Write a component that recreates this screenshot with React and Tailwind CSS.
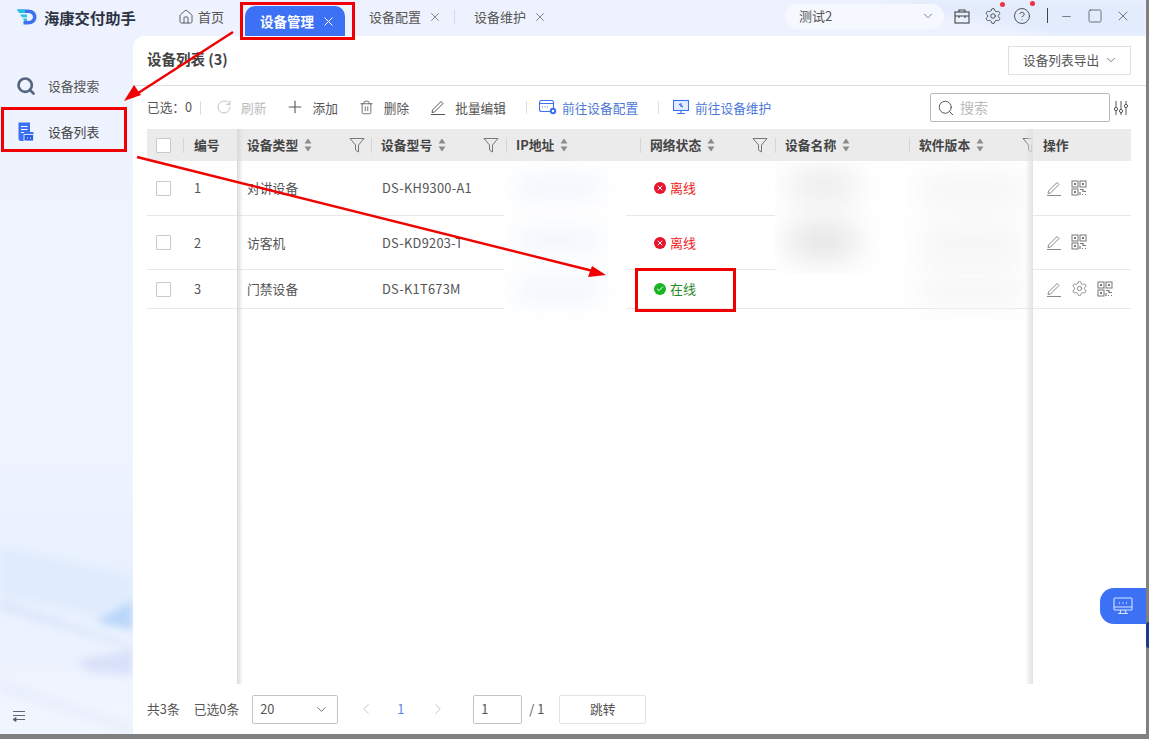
import { ChevronDown, ChevronLeft, ChevronRight, Settings, House, X, Plus, Trash2, RotateCw, Search, CircleHelp, Minus, Square, Check } from 'lucide-react';

const font = { fontFamily: '"Noto Sans CJK SC", "Liberation Sans", sans-serif' };

const columns = [
  { title: '设备类型', w: 'w-[134px]', filter: 'right-[6px]' },
  { title: '设备型号', w: 'w-[135px]', filter: 'right-[7px]' },
  { title: 'IP地址', w: 'w-[134px]' },
  { title: '网络状态', w: 'w-[135px]', filter: 'right-[7px]' },
  { title: '设备名称', w: 'w-[134px]' },
  { title: '软件版本', w: 'w-[124px]', filter: 'right-[-5px]' },
];

const rows = [
  { id: 1, type: '对讲设备', model: 'DS-KH9300-A1', online: false, h: 'h-[55px]' },
  { id: 2, type: '访客机', model: 'DS-KD9203-T', online: false, h: 'h-[54px]' },
  { id: 3, type: '门禁设备', model: 'DS-K1T673M', online: true, h: 'h-[39px]' },
];

function SortArrows() {
  return (
    <svg width="8" height="14" viewBox="0 0 8 14" className="ml-[6px] shrink-0">
      <path d="M4 0.5 L7.5 5.5 H0.5Z M4 13.5 L0.5 8.5 H7.5Z" fill="#8b8b8b" />
    </svg>
  );
}

function FilterIcon({ className }) {
  return (
    <svg width="16" height="16" viewBox="0 0 16 16" fill="none" stroke="#777" strokeWidth="1" className={className}>
      <path d="M1 1.5 H15 L9.5 8 V15 L6.5 13 V8Z" />
    </svg>
  );
}

function HeaderCell({ col }) {
  return (
    <div className={`${col.w} relative flex items-center pl-[10px] shrink-0`}>
      <span className="w-px h-[15px] bg-[#d6d6d6] absolute left-0 top-[9px]" />
      <span className="text-[12.8px] font-bold text-[#444]">{col.title}</span>
      <SortArrows />
      {col.filter && <FilterIcon className={`absolute top-[8px] ${col.filter}`} />}
    </div>
  );
}

function QrIcon() {
  return (
    <svg width="16" height="16" viewBox="0 0 16 16" fill="none" stroke="#777" strokeWidth="1">
      <rect x="1" y="1" width="6" height="6" />
      <rect x="9" y="1" width="6" height="6" />
      <rect x="1" y="9" width="6" height="6" />
      <rect x="3.5" y="3.5" width="1" height="1" fill="#777" />
      <rect x="11.5" y="3.5" width="1" height="1" fill="#777" />
      <rect x="3.5" y="11.5" width="1" height="1" fill="#777" />
      <path d="M9 9.5h3v2h3M9 12v3M11 14.5h1M14 14.5h1" strokeWidth="1.2" />
    </svg>
  );
}

function PenLine({ size = 16, color = '#888' }) {
  return (
    <svg width={size} height={size} viewBox="0 0 16 16" fill="none" stroke={color} strokeWidth="1">
      <path d="M2.5 11 L11 2.5 L13 4.5 L4.5 13 L2 13.5Z" />
      <path d="M1 15.5 H15" />
    </svg>
  );
}

function Checkbox() {
  return <span className="block w-[15px] h-[15px] border border-[#c9c9c9] rounded-[1px] bg-white" />;
}

function Status({ online }) {
  return (
    <div className="flex items-center gap-[4px] pl-[14px]">
      {online ? (
        <span className="w-3 h-3 rounded-full bg-[#17b51f] flex items-center justify-center">
          <Check size={8} strokeWidth={3} className="text-white" />
        </span>
      ) : (
        <span className="w-3 h-3 rounded-full bg-[#e8142c] flex items-center justify-center">
          <X size={8} strokeWidth={3} className="text-white" />
        </span>
      )}
      <span className={`text-[13px] ${online ? 'text-[#1f8a1f]' : 'text-[#f01818]'}`}>{online ? '在线' : '离线'}</span>
    </div>
  );
}

function ToolItem({ icon, label, className }) {
  return (
    <div className={`flex items-center ${className}`}>
      {icon}
      <span className="text-[12.7px]">{label}</span>
    </div>
  );
}

export default function App() {
  return (
    <div className="relative w-[1149px] h-[739px] overflow-hidden bg-[#808080]" style={font}>
      <div className="absolute left-[1146px] top-[622px] w-[6px] h-[26px] rounded-full bg-[#1e3a8a]" />
      <div className="relative w-[1146px] h-[734px] overflow-hidden flex flex-col bg-[linear-gradient(180deg,#edf2fe_0%,#eff4ff_60%,#e9f1fe_78%,#f1f5fe_100%)]">
        {/* blurred wallpaper behind the sidebar and the title bar */}
        <svg width="1146" height="734" className="absolute inset-0 pointer-events-none">
          <defs>
            <filter id="soft"><feGaussianBlur stdDeviation="4" /></filter>
          </defs>
          <g filter="url(#soft)">
            <path d="M0 545 L133 575 V625 L0 595Z" fill="#e0ecfd" />
            <path d="M95 622 L133 600 V630Z" fill="#b9d6fb" />
            <path d="M0 598 L133 645 V650 L0 610Z" fill="#dde7fb" />
            <path d="M75 660 L133 650 V675 L90 672Z" fill="#d9e1fa" />
            <path d="M0 680 L133 725 V734 L0 692Z" fill="#e9effc" />
            <path d="M870 0 H1146 V36 H1060Z" fill="#e2ecfd" />
          </g>
        </svg>

        {/* title bar */}
        <header className="relative h-[36px] shrink-0 flex">
          <div className="w-[178px] flex items-center pl-[17px] gap-[7px] shrink-0 pb-[2px]">
            <svg width="20" height="16" viewBox="0 0 20 16">
              <path d="M0 0.5 H11 C16 0.5 19.5 3.6 19.5 8 C19.5 12.4 16 15.5 11 15.5 H6.5 V12 H11 C14 12 16 10.3 16 8 C16 5.7 14 4 11 4 H2.5Z" fill="#3c70f5" />
              <path d="M0 0.5 H8 V4 H2.5Z" fill="#22c3e6" />
              <path d="M3.2 5.5 H10 V8.2 H5Z" fill="#22c3e6" />
              <path d="M5.6 9.6 H10 V12 H7.5Z" fill="#22c3e6" />
            </svg>
            <span className="text-[15.3px] font-bold text-[#2c3444] whitespace-nowrap">海康交付助手</span>
          </div>
          <div className="flex items-center gap-[4px] text-[13px] text-[#555] pb-[2px]">
            <House size={16} strokeWidth={1.4} className="text-[#555]" />
            <span>首页</span>
          </div>
          <div className="relative w-[100px] h-[30px] ml-[21px] mt-[6px] rounded-t-[10px] bg-[#3c70f5] flex items-center justify-center gap-[7px] text-white pl-[6px]">
            <span className="text-[13.5px] font-bold">设备管理</span>
            <X size={15} strokeWidth={1.6} />
          </div>
          <div className="flex items-center gap-[7px] text-[13px] text-[#555] pl-[24px] pb-[2px]">
            <span>设备配置</span>
            <X size={14} strokeWidth={1.3} className="text-[#666]" />
          </div>
          <div className="flex items-center gap-[7px] text-[13px] text-[#555] pl-[12px] pb-[2px]">
            <span className="w-px h-[14px] bg-[#d4d9e4] mr-[12px]" />
            <span>设备维护</span>
            <X size={14} strokeWidth={1.3} className="text-[#666]" />
          </div>
          <div className="ml-auto flex items-center pb-[4px]">
            <div className="w-[159px] h-[25px] rounded-full bg-[#f5f8ff] flex items-center justify-between pl-[14px] pr-[9px] text-[13px] text-[#555] mr-[10px]">
              <span>测试2</span>
              <ChevronDown size={14} strokeWidth={1.4} className="text-[#666]" />
            </div>
            <div className="mr-[14px]">
              <svg width="16" height="15" viewBox="0 0 16 15" fill="none" stroke="#444" strokeWidth="1.1" className="block">
                <rect x="1" y="3" width="14" height="11" />
                <path d="M1 7 H15 M5 3 V1 H11 V3 M5 7 V9 M11 7 V9" />
              </svg>
            </div>
            <div className="relative mr-[11px]">
              <Settings size={18} strokeWidth={1.2} className="text-[#444]" />
              <span className="absolute -top-[5px] -right-[3px] w-[5px] h-[5px] rounded-full bg-[#f03040]" />
            </div>
            <div className="relative mr-[16px]">
              <CircleHelp size={18} strokeWidth={1.2} className="text-[#444]" />
              <span className="absolute -top-[6px] -right-[4px] w-[5px] h-[5px] rounded-full bg-[#f03040]" />
            </div>
            <span className="w-px h-[15px] bg-[#444] mr-[12px] -mt-[2px]" />
            <Minus size={13} strokeWidth={1.4} className="text-[#555] mr-[14px]" />
            <Square size={16} strokeWidth={1.2} className="text-[#555] mr-[12px]" />
            <X size={16} strokeWidth={1.2} className="text-[#555] mr-[15px]" />
          </div>
        </header>

        <div className="relative flex-1 flex min-h-0">
          {/* sidebar */}
          <aside className="w-[133px] shrink-0 flex flex-col">
            <div className="h-[27px]" />
            <div className="h-[46px] flex items-center pl-[16px] gap-[12px] text-[12.8px] text-[#555]">
              <Search size={20} strokeWidth={3.2} className="text-[#54667f]" />
              <span>设备搜索</span>
            </div>
            <div className="h-[46px] flex items-center pl-[18px] gap-[14px] text-[12.8px] text-[#444]">
              <svg width="16" height="20" viewBox="0 0 16 20">
                <path d="M0.5 0.5 H12 V10 H15.5 V19 H3 C1.6 19 0.5 17.9 0.5 16.5Z" fill="#3c70f5" />
                <path d="M3 4.5 H9.5 M3 7.5 H9.5 M3 10.5 H6" stroke="#fff" strokeWidth="1" />
                <path d="M6 12.5 H15.5 V19 H6Z" fill="#2c5de0" stroke="#fff" strokeWidth="0.8" />
                <path d="M9 16 H10 M12 16 H13" stroke="#fff" strokeWidth="1" />
              </svg>
              <span>设备列表</span>
            </div>
            <div className="mt-auto pl-[12px] pb-[12px]">
              <svg width="14" height="12" viewBox="0 0 14 12" fill="none" stroke="#666" strokeWidth="1">
                <path d="M1 1.5 H13 M1 5.5 H13 M3 9.5 H13" />
                <path d="M4 7.5 L1 9.5 L4 11.5Z" fill="#555" />
              </svg>
            </div>
          </aside>

          {/* main panel */}
          <main className="relative flex-1 min-w-0 bg-white rounded-tl-[12px] flex flex-col">
            <div className="h-[50px] shrink-0 border-b border-[#dcdcdc] flex items-center justify-between pl-[14px] pr-[15px]">
              <span className="text-[14.5px] font-bold text-[#444] -mt-[3px]">设备列表 (3)</span>
              <div className="w-[123px] h-[29px] border border-[#dcdfe6] flex items-center justify-between pl-[14px] pr-[12px] text-[12.7px] text-[#555] -mt-[1px]">
                <span className="whitespace-nowrap">设备列表导出</span>
                <ChevronDown size={14} strokeWidth={1.3} className="shrink-0" />
              </div>
            </div>

            {/* toolbar */}
            <div className="h-[43px] shrink-0 flex items-center pl-[14px] text-[#555] pr-[17px]">
              <span className="text-[12.7px] whitespace-nowrap -mt-[1px]">已选：0</span>
              <span className="w-px h-[14px] bg-[#e4d8d8] ml-[8px] mr-[15px]" />
              <ToolItem className="text-[#bbb] mr-[21px] gap-[9px]" label="刷新" icon={<RotateCw size={16} strokeWidth={1.3} />} />
              <ToolItem className="mr-[21px] gap-[9px]" label="添加" icon={<Plus size={16} strokeWidth={1.3} className="scale-125" />} />
              <ToolItem className="mr-[21px] gap-[10px]" label="删除" icon={<Trash2 size={15} strokeWidth={1.3} />} />
              <ToolItem className="mr-[20px] gap-[9px]" label="批量编辑" icon={<PenLine color="#555" />} />
              <span className="w-px h-[13px] bg-[#e0e0e0] mr-[12px]" />
              <ToolItem className="text-[#4d78d8] mr-[20px] gap-[5px]" label="前往设备配置" icon={
                <svg width="18" height="16" viewBox="0 0 18 16" fill="none" stroke="#3c70f5" strokeWidth="1.1">
                  <rect x="0.5" y="1.5" width="14" height="11" rx="2" />
                  <path d="M0.5 4.5 H14.5 M3 8 H4 M5.5 8 H6.5 M8 8 H9" />
                  <circle cx="14" cy="12" r="2.2" fill="#fff" strokeWidth="2" />
                </svg>
              } />
              <span className="w-px h-[13px] bg-[#e0e0e0] mr-[14px]" />
              <ToolItem className="text-[#4d78d8] gap-[6px]" label="前往设备维护" icon={
                <svg width="16" height="16" viewBox="0 0 16 16" fill="none" stroke="#3c70f5" strokeWidth="1.1">
                  <rect x="0.5" y="1.5" width="15" height="10" fill="#e6eefe" />
                  <path d="M8 14.5 V11.5 M4 14.5 H12 M6 5 L10 8 M8 4 V8" />
                </svg>
              } />
              <div className="ml-auto w-[180px] h-[29px] border border-[#b9b9b9] rounded-[2px] flex items-center pl-[6px] gap-[5px] text-[#bbb] text-[14px]">
                <Search size={18} strokeWidth={1.3} className="text-[#555]" />
                <span>搜索</span>
              </div>
              <svg width="16" height="16" viewBox="0 0 16 16" fill="none" stroke="#555" strokeWidth="1" className="ml-[3px] shrink-0">
                <path d="M3 1 V15 M8 1 V15 M13 1 V15" />
                <circle cx="3" cy="9" r="1.6" fill="#fff" />
                <circle cx="8" cy="11" r="1.6" fill="#fff" />
                <circle cx="13" cy="6" r="1.6" fill="#fff" />
              </svg>
            </div>

            {/* table */}
            <div className="relative flex-1 ml-[14px] mr-[15px] min-h-0">
              <div className="h-[32px] bg-[#ebebeb] flex text-[12.8px]">
                <div className="w-[36px] flex items-center pl-[9px] shrink-0"><Checkbox /></div>
                <div className="w-[54px] relative flex items-center pl-[11px] font-bold text-[#444] shrink-0">
                  <span className="w-px h-[15px] bg-[#d6d6d6] absolute left-0 top-[9px]" />
                  编号
                </div>
                {columns.map((col) => <HeaderCell key={col.title} col={col} />)}
                <div className="relative z-10 flex-1 flex items-center pl-[10px] font-bold text-[#444] bg-[#ebebeb]">操作</div>
              </div>
              {rows.map((row) => (
                <div key={row.id} className={`${row.h} flex items-center border-b border-[#e8e8e8] text-[12.8px] text-[#555]`}>
                  <div className="w-[36px] pl-[9px] shrink-0"><Checkbox /></div>
                  <div className="w-[54px] pl-[11px] shrink-0">{row.id}</div>
                  <div className="w-[134px] pl-[10px] shrink-0">{row.type}</div>
                  <div className="w-[135px] pl-[11px] shrink-0 tracking-[0.3px]">{row.model}</div>
                  <div className="w-[134px] shrink-0" />
                  <div className="w-[135px] shrink-0"><Status online={row.online} /></div>
                  <div className="w-[258px] shrink-0" />
                  <div className="flex-1 flex items-center gap-[9px] pl-[13px] -mt-[1px]">
                    <PenLine />
                    {row.online && <Settings size={17} strokeWidth={1.2} className="text-[#777]" />}
                    <QrIcon />
                  </div>
                </div>
              ))}

              {/* blurred values, painted over the rows */}
              <div className="absolute left-[357px] top-[36px] w-[122px] h-[150px] bg-white">
                <div className="absolute left-[12px] top-[12px] w-[85px] h-[20px] bg-[#eef3fb] blur-md" />
                <div className="absolute left-[12px] top-[65px] w-[85px] h-[20px] bg-[#eef3fb] blur-md" />
                <div className="absolute left-[12px] top-[115px] w-[85px] h-[20px] bg-[#eef3fb] blur-md" />
              </div>
              <div className="absolute left-[628px] top-[33px] w-[258px] h-[112px] bg-white overflow-hidden">
                <div className="absolute left-[15px] top-[12px] w-[65px] h-[22px] bg-[#e2e2e2] blur-lg" />
                <div className="absolute left-[15px] top-[65px] w-[65px] h-[28px] bg-[#dcdcdc] blur-lg" />
                <div className="absolute left-[145px] top-[18px] w-[105px] h-[22px] bg-[#f0f0f0] blur-lg" />
                <div className="absolute left-[145px] top-[70px] w-[105px] h-[24px] bg-[#f0f0f0] blur-lg" />
              </div>
              <div className="absolute left-[758px] top-[145px] w-[128px] h-[32px] bg-white">
                <div className="absolute left-[15px] top-[6px] w-[105px] h-[20px] bg-[#f0f0f0] blur-lg" />
              </div>

              {/* frozen column shadows */}
              <div className="absolute left-[90px] top-0 bottom-0 w-[6px] bg-gradient-to-r from-[#d9d9d9] to-transparent" />
              <div className="absolute z-20 left-[878px] top-0 bottom-0 w-[8px] bg-gradient-to-l from-[#e2e2e2] to-transparent" />
            </div>

            {/* pagination */}
            <div className="h-[50px] shrink-0 flex items-center pl-[14px] text-[12.8px] text-[#555]">
              <span className="mr-[14px]">共3条</span>
              <span className="mr-[13px]">已选0条</span>
              <div className="w-[86px] h-[29px] border border-[#c4c4c4] rounded-[2px] flex items-center justify-between pl-[7px] pr-[8px] mr-[19px]">
                <span>20</span>
                <ChevronDown size={15} strokeWidth={1.3} />
              </div>
              <ChevronLeft size={18} strokeWidth={1.1} className="text-[#bbb] mr-[22px]" />
              <span className="text-[#5c82e8] mr-[25px]">1</span>
              <ChevronRight size={18} strokeWidth={1.1} className="text-[#bbb] mr-[26px]" />
              <div className="w-[49px] h-[29px] border border-[#c4c4c4] rounded-[2px] flex items-center pl-[7px] mr-[7px]">1</div>
              <span className="mr-[15px]">/ 1</span>
              <div className="w-[87px] h-[29px] border border-[#e2e2e2] rounded-[2px] flex items-center justify-center">跳转</div>
            </div>
          </main>
        </div>

        {/* floating button */}
        <div className="absolute right-0 top-[588px] w-[46px] h-[36px] rounded-l-[14px] bg-[#3c70f5] flex items-center justify-center">
          <svg width="20" height="18" viewBox="0 0 20 18" fill="none" stroke="#d8e4ff" strokeWidth="1.1">
            <rect x="1" y="1" width="18" height="12" rx="1" />
            <path d="M1 10 H19 M8 13 L7 16 M12 13 L13 16 M5 16.5 H15" />
            <path d="M6 6 H7 M9.5 6 H10.5 M13 6 H14" strokeWidth="1.6" />
          </svg>
        </div>
      </div>

      {/* screenshot annotations */}
      <div className="absolute left-[240px] top-[2px] w-[115px] h-[38px] border-[3px] border-[#f00000]" />
      <div className="absolute left-[1px] top-[107px] w-[126px] h-[45px] border-[3px] border-[#f00000]" />
      <div className="absolute left-[635px] top-[268px] w-[101px] h-[44px] border-[3px] border-[#f00000]" />
      <svg width="1149" height="739" className="absolute inset-0 pointer-events-none">
        <path d="M233 32 L132 97" stroke="#f00000" strokeWidth="2.4" />
        <path d="M124 101 L141 95 L134 85Z" fill="#f00000" />
        <path d="M137 157 L597 272" stroke="#f00000" strokeWidth="2.4" />
        <path d="M606 275 L588 277 L592 266Z" fill="#f00000" />
      </svg>
    </div>
  );
}
